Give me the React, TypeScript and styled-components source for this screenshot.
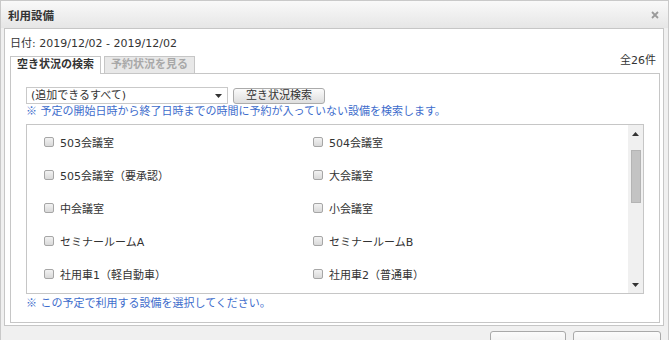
import styled, { createGlobalStyle } from 'styled-components';

const GlobalStyle = createGlobalStyle`
    html, body {
        margin: 0;
        padding: 0;
        background: #fff;
    }
    body {
        font-family: "DejaVu Sans", "Noto Sans CJK JP", sans-serif;
        font-size: 11px;
        color: #333;
    }
`;

const Dialog = styled.div`
    width: 669px;
    height: 340px;
    box-sizing: border-box;
    border: 1px solid #c9c9c9;
    border-bottom: none;
    background: #f0f0f0;
    overflow: hidden;
    display: flex;
    flex-direction: column;
`;

const TitleBar = styled.div`
    height: 27px;
    flex-shrink: 0;
    display: flex;
    align-items: center;
    justify-content: space-between;
    padding: 0 9px 0 7px;
    background: linear-gradient(#f9f9f9, #e6e6e6);
`;

const Title = styled.span`
    font-weight: bold;
    font-size: 11.5px;
    color: #333;
`;

const CloseButton = styled.span`
    display: flex;
    width: 8px;
    height: 8px;
    cursor: pointer;
`;

const Body = styled.div`
    height: 298px;
    flex-shrink: 0;
    box-sizing: border-box;
    margin: 0 4px 0 3px;
    border: 1px solid #c6c6c6;
    background: #fff;
    padding: 7px 3px 2px 5px;
    display: flex;
    flex-direction: column;
`;

const DateLine = styled.div`
    line-height: 15px;
`;

const TabRow = styled.div`
    margin-top: 5px;
    display: flex;
    justify-content: space-between;
    align-items: flex-start;
`;

const Tabs = styled.div`
    display: flex;
    gap: 3px;
`;

const Tab = styled.div<{ $active?: boolean }>`
    box-sizing: border-box;
    padding: 0 6px;
    line-height: 16px;
    font-weight: bold;
    border: 1px solid #c6c6c6;
    border-bottom: none;
    position: relative;
    z-index: 1;
    background: ${(p) => (p.$active ? '#fff' : '#e8e8e8')};
    color: ${(p) => (p.$active ? '#333' : '#a8a8a8')};
    height: ${(p) => (p.$active ? '18px' : '17px')};
    margin-bottom: ${(p) => (p.$active ? '-1px' : '0')};
`;

const Count = styled.div`
    margin-top: -3px;
    margin-right: 4px;
    line-height: 15px;
`;

const TabPanel = styled.div`
    height: 250px;
    box-sizing: border-box;
    border: 1px solid #c6c6c6;
    padding: 13px 15px 0;
    display: flex;
    flex-direction: column;
`;

const SearchRow = styled.div`
    display: flex;
    align-items: flex-start;
    gap: 5px;
`;

const Select = styled.div`
    width: 202px;
    height: 17px;
    box-sizing: border-box;
    border: 1px solid #c9c9c9;
    padding: 0 5px 0 4px;
    display: flex;
    align-items: center;
    justify-content: space-between;
    line-height: 15px;
    background: #fff;
`;

const SearchButton = styled.button`
    margin-top: 1px;
    width: 92px;
    height: 16px;
    box-sizing: border-box;
    padding: 0;
    border: 1px solid #ababab;
    border-radius: 3px;
    background: linear-gradient(#fbfbfb, #dedede);
    font: inherit;
    line-height: 14px;
    color: #333;
`;

const Note = styled.div<{ $gap?: number }>`
    margin-top: ${(p) => p.$gap ?? 0}px;
    height: 16px;
    flex-shrink: 0;
    line-height: 16px;
    color: #3d6ccc;
`;

const Mark = styled.span`
    font-family: "Noto Sans CJK JP", sans-serif;
    line-height: 1;
`;

const ListBox = styled.div`
    margin-top: 4px;
    height: 170px;
    flex-shrink: 0;
    box-sizing: border-box;
    border: 1px solid #c6c6c6;
    display: flex;
`;

const ItemGrid = styled.div`
    flex: 1;
    overflow: hidden;
    display: grid;
    grid-template-columns: 269px 1fr;
    grid-auto-rows: 33px;
    align-content: start;
    padding-left: 17px;
`;

const Item = styled.label`
    display: flex;
    align-items: center;
    gap: 6px;
`;

const Check = styled.input`
    appearance: none;
    margin: 0;
    width: 10px;
    height: 10px;
    box-sizing: border-box;
    border: 1px solid #a6a6a6;
    border-radius: 2px;
    background: linear-gradient(#f2f2f2, #d9d9d9);
`;

const ScrollBar = styled.div`
    width: 15px;
    flex-shrink: 0;
    background: #f0f0f0;
    display: flex;
    flex-direction: column;
`;

const ScrollArrow = styled.div`
    height: 17px;
    display: flex;
    align-items: center;
    justify-content: center;
`;

const Track = styled.div`
    flex: 1;
`;

const Thumb = styled.div`
    margin: 8px 0 0 3px;
    width: 10px;
    height: 53px;
    box-sizing: border-box;
    border: 1px solid #b4b4b4;
    background: #c3c3c3;
`;

const ButtonPane = styled.div`
    display: flex;
    justify-content: flex-end;
    gap: 7px;
    padding: 5px 7px 0 0;
`;

const DlgButton = styled.button<{ $w: number }>`
    width: ${(p) => p.$w}px;
    height: 30px;
    flex-shrink: 0;
    box-sizing: border-box;
    border: 1px solid #a9a9a9;
    border-radius: 3px;
    background: linear-gradient(#fbfbfb, #e2e2e2);
    font: inherit;
    color: #333;
`;

function Triangle({ up }: { up?: boolean }) {
    return (
        <svg width="7" height="4" viewBox="0 0 7 4">
            <polygon points={up ? '0,4 7,4 3.5,0' : '0,0 7,0 3.5,4'} fill="#333" />
        </svg>
    );
}

// 一覧の表示範囲に入っている分だけ
const facilities = [
    '503会議室',
    '504会議室',
    '505会議室（要承認）',
    '大会議室',
    '中会議室',
    '小会議室',
    'セミナールームA',
    'セミナールームB',
    '社用車1（軽自動車）',
    '社用車2（普通車）',
];
const total = 26;

function App() {
    return (
        <>
            <GlobalStyle />
            <Dialog>
                <TitleBar>
                    <Title>利用設備</Title>
                    <CloseButton>
                        <svg width="8" height="8" viewBox="0 0 8 8">
                            <path d="M1 1 L7 7 M7 1 L1 7" stroke="#9a9a9a" strokeWidth="1.8" />
                        </svg>
                    </CloseButton>
                </TitleBar>
                <Body>
                    <DateLine>日付: 2019/12/02 - 2019/12/02</DateLine>
                    <TabRow>
                        <Tabs>
                            <Tab $active>空き状況の検索</Tab>
                            <Tab>予約状況を見る</Tab>
                        </Tabs>
                        <Count>全{total}件</Count>
                    </TabRow>
                    <TabPanel>
                        <SearchRow>
                            <Select>
                                <span>(追加できるすべて)</span>
                                <Triangle />
                            </Select>
                            <SearchButton>空き状況検索</SearchButton>
                        </SearchRow>
                        <Note>
                            <Mark>※</Mark> 予定の開始日時から終了日時までの時間に予約が入っていない設備を検索します。
                        </Note>
                        <ListBox>
                            <ItemGrid>
                                {facilities.map((name) => (
                                    <Item key={name}>
                                        <Check type="checkbox" />
                                        {name}
                                    </Item>
                                ))}
                            </ItemGrid>
                            <ScrollBar>
                                <ScrollArrow>
                                    <Triangle up />
                                </ScrollArrow>
                                <Track>
                                    <Thumb />
                                </Track>
                                <ScrollArrow>
                                    <Triangle />
                                </ScrollArrow>
                            </ScrollBar>
                        </ListBox>
                        <Note $gap={2}>
                            <Mark>※</Mark> この予定で利用する設備を選択してください。
                        </Note>
                    </TabPanel>
                </Body>
                <ButtonPane>
                    <DlgButton $w={76}>選択</DlgButton>
                    <DlgButton $w={88}>キャンセル</DlgButton>
                </ButtonPane>
            </Dialog>
        </>
    );
}

export default App;
